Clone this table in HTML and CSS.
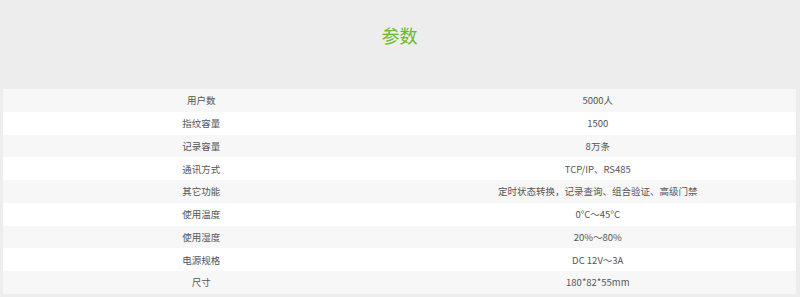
FILE: index.html
```html
<!DOCTYPE html>
<html lang="zh-CN">
<head>
<meta charset="utf-8">
<title>参数</title>
<link rel="stylesheet" href="styles.css">
</head>
<body>
<div class="page">
  <h2 class="title">参数</h2>
  <table class="spec">
    <tbody>
      <tr><td>用户数</td><td>5000人</td></tr>
      <tr><td>指纹容量</td><td>1500</td></tr>
      <tr><td>记录容量</td><td>8万条</td></tr>
      <tr><td>通讯方式</td><td>TCP/IP、RS485</td></tr>
      <tr><td>其它功能</td><td>定时状态转换，记录查询、组合验证、高级门禁</td></tr>
      <tr><td>使用温度</td><td>0°C～45°C</td></tr>
      <tr><td>使用湿度</td><td>20%～80%</td></tr>
      <tr><td>电源规格</td><td>DC 12V～3A</td></tr>
      <tr><td>尺寸</td><td>180*82*55mm</td></tr>
    </tbody>
  </table>
</div>
</body>
</html>
```
FILE: styles.css
```css
html, body {
  margin: 0;
  padding: 0;
  background: #ededed;
}
.page {
  padding: 26px 4px 0 3px;
  font-family: "Noto Sans CJK SC", "Noto Sans", sans-serif;
}
.title {
  margin: 0 0 45px;
  font-size: 18px;
  line-height: 18px;
  font-weight: normal;
  color: #6bb72b;
  text-align: center;
}
.spec {
  width: 100%;
  border-collapse: collapse;
  table-layout: fixed;
}
.spec td {
  width: 50%;
  height: 22.75px;
  padding: 0;
  text-align: center;
  font-size: 9.5px;
  line-height: 14px;
  color: #555555;
}
.spec tr:nth-child(odd) td {
  background: #f7f7f7;
}
.spec tr:nth-child(even) td {
  background: #ffffff;
}
```
